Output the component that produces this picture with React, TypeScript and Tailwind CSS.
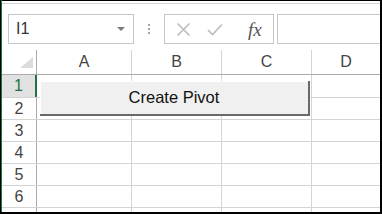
import React from "react";

const font = { fontFamily: '"Liberation Sans", Arial, sans-serif' };

const ROWS = [1, 2, 3, 4, 5, 6, 7];
const COLS = [
  { label: "A", w: "w-[95px] border-r" },
  { label: "B", w: "w-[90px] border-r" },
  { label: "C", w: "w-[90px] border-r" },
  { label: "D", w: "flex-1" },
];

function FormulaBar() {
  return (
    <div className="border-t border-black pt-[2px] h-[50px]">
      <div className="h-px bg-[#d4d4d4]" />
      <div className="mt-[10px] h-[30px] flex items-stretch pl-[6px]">
        {/* ── Name box ── */}
        <div className="w-[126px] border border-[#c6c6c6] flex items-center justify-between pl-[7px] pr-[8px]">
          <span className="text-[16px] text-[#333]">I1</span>
          <svg width="8" height="5" viewBox="0 0 8 5">
            <path d="M0 0 H8 L4 4 Z" fill="#7a7a7a" />
          </svg>
        </div>
        {/* ── Dots ── */}
        <div className="w-[30px] flex flex-col items-center justify-center gap-[2px]">
          <span className="w-[2px] h-[2px] bg-[#a6a6a6]" />
          <span className="w-[2px] h-[2px] bg-[#a6a6a6]" />
          <span className="w-[2px] h-[2px] bg-[#a6a6a6]" />
        </div>
        {/* ── Cancel / enter / fx ── */}
        <div className="w-[110px] border border-[#c6c6c6] flex items-center pl-[11px] gap-[16px]">
          <svg width="15" height="15" viewBox="0 0 15 15">
            <path d="M1.5 1.5 L13.5 13.5 M13.5 1.5 L1.5 13.5" stroke="#bcbcbc" strokeWidth="1.6" />
          </svg>
          <svg width="16" height="13" viewBox="0 0 16 13">
            <path d="M1 7 L5.5 11.5 L15 1.5" stroke="#bcbcbc" strokeWidth="1.6" fill="none" />
          </svg>
          <span
            className="text-[19px] italic text-[#555] ml-[9px] leading-none"
            style={{ fontFamily: '"Liberation Serif", "Times New Roman", serif' }}
          >
            fx
          </span>
        </div>
        <div className="ml-[3px] flex-1 border-t border-b border-l border-[#c6c6c6]" />
      </div>
    </div>
  );
}

export default function App() {
  return (
    <div
      className="w-[382px] h-[214px] bg-white border-l border-r-2 border-b-2 border-black overflow-hidden"
      style={font}
    >
      <div className="h-full border-l border-[#217346] flex flex-col">
        <FormulaBar />

        <div className="relative flex-1 overflow-hidden">
          {/* ── Column headers ── */}
          <div className="flex h-[25px] border-b border-[#ababab]">
            <div className="w-[35px] border-r border-[#ababab] relative">
              <svg className="absolute right-[3px] bottom-[6px]" width="13" height="11" viewBox="0 0 13 11">
                <path d="M13 0 V11 H0 Z" fill="#dcdcdc" />
              </svg>
            </div>
            {COLS.map((c) => (
              <div
                key={c.label}
                className={`${c.w} border-[#d4d4d4] flex items-center justify-center text-[16px] text-[#444]`}
              >
                {c.label}
              </div>
            ))}
          </div>

          {/* ── Rows ── */}
          {ROWS.map((r) => (
            <div
              key={r}
              className={`flex border-b border-[#d4d4d4] ${r === 1 ? "h-[23px]" : "h-[22px]"}`}
            >
              <div
                className={
                  r === 1
                    ? "w-[35px] border-r-2 border-[#217346] bg-[#e1e1e1] flex items-center justify-center text-[16px] text-[#217346]"
                    : "w-[35px] border-r border-[#ababab] flex items-center justify-center text-[16px] text-[#444]"
                }
              >
                {r < 7 ? r : null}
              </div>
              <div className="w-[95px] border-r border-[#d4d4d4]" />
              <div className="w-[90px] border-r border-[#d4d4d4]" />
              <div className="w-[90px] border-r border-[#d4d4d4]" />
              <div className="flex-1" />
            </div>
          ))}

          {/* ── Button over the sheet ── */}
          <button className="absolute left-[38px] top-[31px] w-[270px] h-[35px] bg-[#f0f0f0] border-r-2 border-b-2 border-[#696969] shadow-[inset_1px_1px_0_#ffffff] flex items-center justify-center text-[16.5px] text-[#111]">
            Create Pivot
          </button>
        </div>
      </div>
    </div>
  );
}
